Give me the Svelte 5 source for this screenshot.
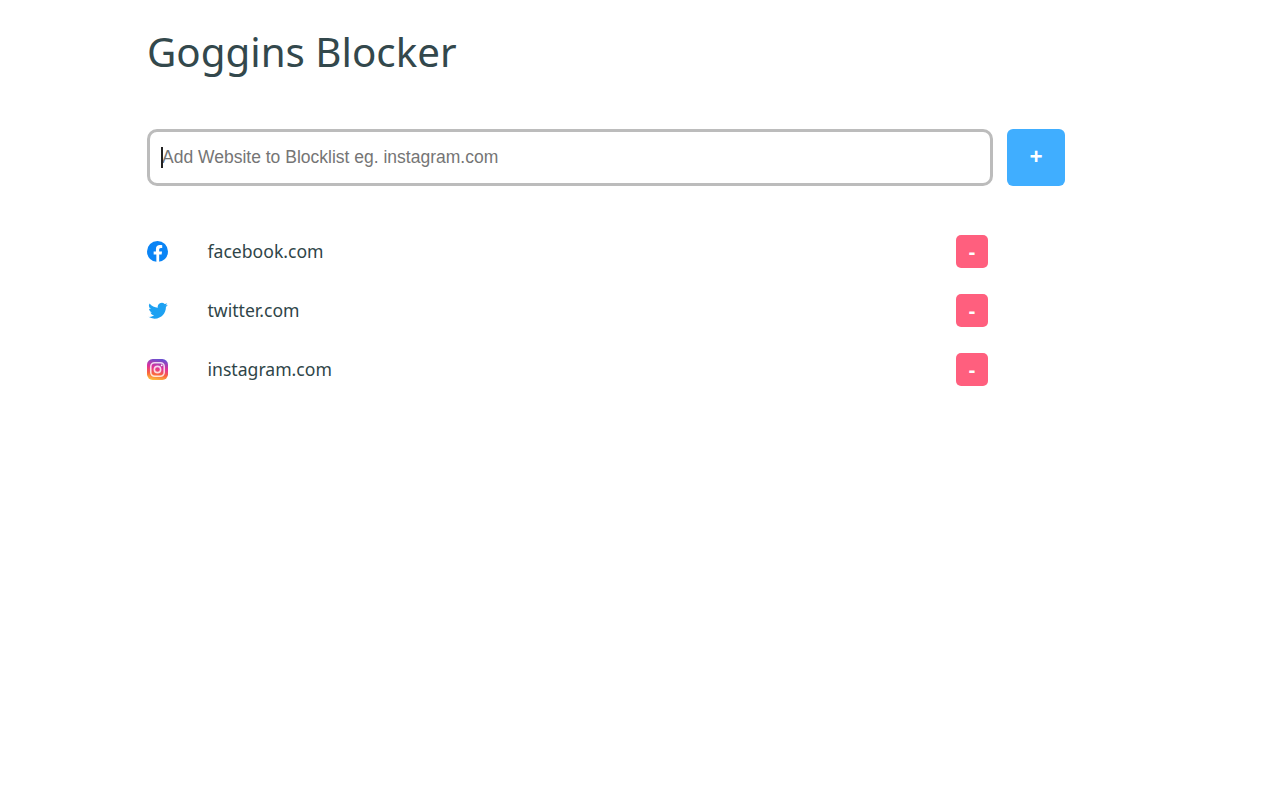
<script>
	const sites = [
		{ name: "facebook.com", icon: "fb" },
		{ name: "twitter.com", icon: "tw" },
		{ name: "instagram.com", icon: "ig" },
	]
</script>

<main>
	<h1>Goggins Blocker</h1>

	<form class="add" onsubmit={(e) => e.preventDefault()}>
		<div class="field">
			<span class="caret"></span>
			<input type="text" placeholder="Add Website to Blocklist eg. instagram.com" />
		</div>
		<button class="plus" type="submit">+</button>
	</form>

	<ul>
		{#each sites as site}
			<li>
				<span class="icon">
					{#if site.icon === "fb"}
						<svg viewBox="0 0 24 24" width="21" height="21">
							<circle cx="12" cy="12" r="12" fill="#0a84f5" />
							<path fill="#fff" d="M16.700 15.500l.5-3.500h-3.300V9.800c0-1 .5-1.900 2-1.900h1.500v-3s-1.400-.2-2.700-.2c-2.700 0-4.500 1.600-4.500 4.600V12H7.600v3.500h3.100V24a12 12 0 0 0 3.200 0v-8.500z" />
						</svg>
					{:else if site.icon === "tw"}
						<svg class="bird" viewBox="0 0 24 24" width="20" height="20">
							<path fill="#1da1f2" d="M23.600 5.600c-.8.400-1.800.6-2.700.8 1-.6 1.700-1.500 2.100-2.600-.9.500-1.900.9-3 1.100a4.800 4.800 0 0 0-8.200 4.400C7.800 9.100 4.300 7.200 1.900 4.300a4.800 4.800 0 0 0 1.500 6.400c-.8 0-1.500-.2-2.200-.6v.1c0 2.300 1.600 4.200 3.900 4.700-.7.200-1.400.2-2.200.1.600 1.900 2.400 3.300 4.500 3.300A9.700 9.700 0 0 1 .4 20.200a13.700 13.700 0 0 0 7.400 2.200c8.900 0 13.700-7.400 13.700-13.700v-.6c1-.7 1.800-1.500 2.100-2.500z" />
						</svg>
					{:else}
						<svg viewBox="0 0 24 24" width="21" height="21">
							<defs>
								<linearGradient id="ig-grad" x1="0.3" y1="1" x2="0.5" y2="0">
									<stop offset="0" stop-color="#fdc13a" />
									<stop offset="0.3" stop-color="#f9633f" />
									<stop offset="0.6" stop-color="#e0309a" />
									<stop offset="1" stop-color="#6a4fd0" />
								</linearGradient>
							</defs>
							<rect width="24" height="24" rx="6.500" fill="url(#ig-grad)" />
							<rect x="4.300" y="4.300" width="15.400" height="15.400" rx="4.500" fill="none" stroke="#fff" stroke-opacity="0.8" stroke-width="1.800" />
							<circle cx="12" cy="12" r="3.600" fill="none" stroke="#fff" stroke-opacity="0.8" stroke-width="1.800" />
							<circle cx="16.800" cy="7.200" r="1" fill="#fff" />
						</svg>
					{/if}
				</span>
				<span class="name">{site.name}</span>
				<button class="minus" type="button">-</button>
			</li>
		{/each}
	</ul>
</main>

<style>
	:global(body) {
		background: #fff;
		color: #2f4548;
		font-family: "Noto Sans", "Open Sans", sans-serif;
	}

	main {
		width: 918px;
		padding: 24px 0 0 147px;
	}

	h1 {
		margin: 0;
		font-size: 40.300px;
		line-height: 56px;
		font-weight: 400;
		color: #33484c;
	}

	.add {
		display: flex;
		gap: 14px;
		margin-top: 48.500px;
	}

	.field {
		position: relative;
		flex: 1;
	}

	input {
		box-sizing: border-box;
		display: block;
		width: 100%;
		height: 57.500px;
		padding: 0 12px;
		border: 3px solid #bcbcbc;
		border-radius: 10px;
		outline: none;
		background: #fff;
		font-family: "Liberation Sans", Arial, sans-serif;
		font-size: 17.500px;
	}

	input::placeholder {
		color: #757575;
		opacity: 1;
	}

	.caret {
		position: absolute;
		left: 14px;
		top: 18px;
		width: 1.500px;
		height: 21px;
		background: #222;
	}

	button {
		border: none;
		padding: 0;
		color: #fff;
		font-family: "Noto Sans", sans-serif;
		font-weight: 700;
	}

	.plus {
		width: 58px;
		height: 57.500px;
		border-radius: 6px;
		background: #40aeff;
		font-size: 23px;
		padding-bottom: 2px;
	}

	ul {
		list-style: none;
		margin: 36px 0 0;
		padding: 0;
		width: 841px;
	}

	li {
		display: flex;
		align-items: center;
		height: 59px;
	}

	.icon {
		display: flex;
		width: 60.500px;
	}

	.bird {
		margin: -1px 0 1px 0.500px;
	}

	.name {
		flex: 1;
		font-size: 17.600px;
		color: #2f4548;
		padding-bottom: 2px;
	}

	.minus {
		width: 32px;
		height: 33px;
		border-radius: 5px;
		background: #ff5f7e;
		font-size: 20px;
	}
</style>
